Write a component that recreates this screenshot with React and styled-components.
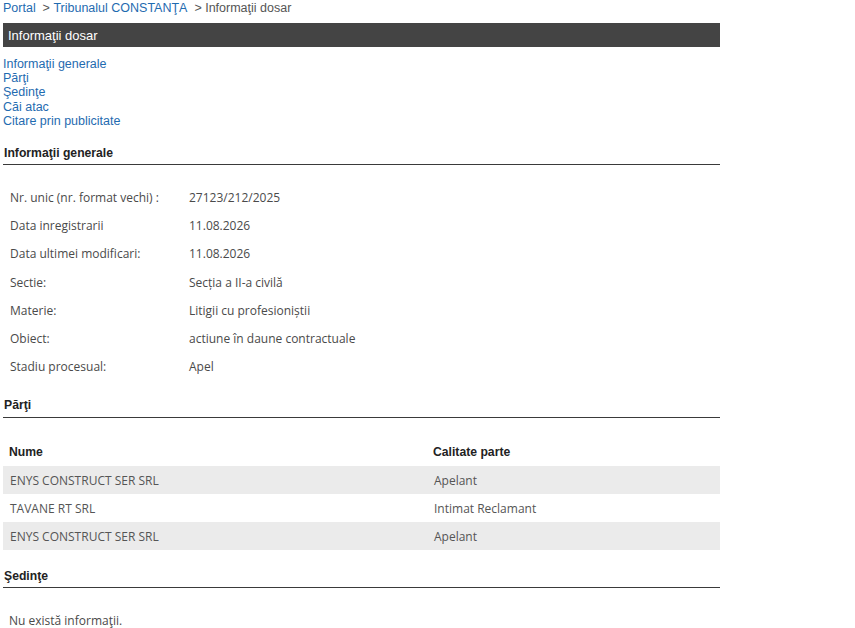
import React from 'react';
import styled, { createGlobalStyle } from 'styled-components';

const GlobalStyle = createGlobalStyle`
  html, body {
    margin: 0;
    padding: 0;
    background: #ffffff;
  }
  body {
    font-family: 'Liberation Sans', Arial, sans-serif;
  }
`;

const Page = styled.div`
  width: 717px;
  padding: 0 3px;
`;

const Breadcrumb = styled.div`
  display: flex;
  align-items: center;
  height: 15px;
  font-size: 12.5px;
  color: #555;
  white-space: pre;
`;

const CrumbLink = styled.a`
  color: #1f6bb0;
  text-decoration: none;
`;

const TitleBar = styled.div`
  margin-top: 8px;
  height: 24px;
  display: flex;
  align-items: center;
  padding-left: 5px;
  background: #444444;
  color: #ffffff;
  font-size: 13px;
`;

const AnchorList = styled.nav`
  display: flex;
  flex-direction: column;
  margin-top: 10px;
`;

const Anchor = styled.a`
  color: #1f6bb0;
  font-size: 12.5px;
  line-height: 14.2px;
  text-decoration: none;
`;

const SectionTitle = styled.h3`
  margin: ${p => p.$top}px 0 0;
  padding: 0 0 ${p => p.$gap || 3}px 1px;
  border-bottom: 1px solid #3a3a3a;
  font-size: 12.2px;
  font-weight: bold;
  color: #222;
  line-height: 15px;
`;

const InfoGrid = styled.div`
  display: grid;
  grid-template-columns: 179px 1fr;
  margin-top: 18px;
  padding-left: 7px;
  font-family: 'Open Sans', 'DejaVu Sans', sans-serif;
  font-size: 12px;
  color: #4a4a4a;
`;

const InfoCell = styled.div`
  height: 28.3px;
  display: flex;
  align-items: center;
`;

const PartsTable = styled.div`
  margin-top: 20px;
  display: flex;
  flex-direction: column;
`;

const PartsRow = styled.div`
  display: grid;
  grid-template-columns: 424px 1fr;
  height: 28px;
  align-items: center;
  background: ${p => (p.$shaded ? '#ebebeb' : 'transparent')};
`;

const HeadCell = styled.div`
  padding-left: 6px;
  font-size: 12.2px;
  font-weight: bold;
  color: #222;
`;

const BodyCell = styled.div`
  padding-left: 7px;
  font-family: 'Open Sans', 'DejaVu Sans', sans-serif;
  font-size: 12px;
  color: #555;
`;

const EmptyNote = styled.p`
  margin: 26px 0 0 6px;
  font-family: 'Open Sans', 'DejaVu Sans', sans-serif;
  font-size: 12px;
  line-height: 14px;
  color: #4a4a4a;
`;

const info = [
  ['Nr. unic (nr. format vechi) :', '27123/212/2025'],
  ['Data inregistrarii', '11.08.2026'],
  ['Data ultimei modificari:', '11.08.2026'],
  ['Sectie:', 'Secția a II-a civilă'],
  ['Materie:', 'Litigii cu profesioniștii'],
  ['Obiect:', 'actiune în daune contractuale'],
  ['Stadiu procesual:', 'Apel'],
];

const parties = [
  ['ENYS CONSTRUCT SER SRL', 'Apelant'],
  ['TAVANE RT SRL', 'Intimat Reclamant'],
  ['ENYS CONSTRUCT SER SRL', 'Apelant'],
];

export default function App() {
  return (
    <Page>
      <GlobalStyle />
      <Breadcrumb>
        <CrumbLink href="#">Portal</CrumbLink>
        {'  > '}
        <CrumbLink href="#">Tribunalul CONSTANŢA</CrumbLink>
        {'  > Informaţii dosar'}
      </Breadcrumb>

      <TitleBar>Informaţii dosar</TitleBar>

      <AnchorList>
        <Anchor href="#generale">Informaţii generale</Anchor>
        <Anchor href="#parti">Părţi</Anchor>
        <Anchor href="#sedinte">Şedinţe</Anchor>
        <Anchor href="#cai">Căi atac</Anchor>
        <Anchor href="#citare">Citare prin publicitate</Anchor>
      </AnchorList>

      <SectionTitle id="generale" $top={18}>Informaţii generale</SectionTitle>
      <InfoGrid>
        {info.map(([label, value]) => (
          <React.Fragment key={label}>
            <InfoCell>{label}</InfoCell>
            <InfoCell>{value}</InfoCell>
          </React.Fragment>
        ))}
      </InfoGrid>

      <SectionTitle id="parti" $top={17} $gap={4}>Părţi</SectionTitle>
      <PartsTable>
        <PartsRow>
          <HeadCell>Nume</HeadCell>
          <HeadCell>Calitate parte</HeadCell>
        </PartsRow>
        {parties.map(([name, role], i) => (
          <PartsRow key={i} $shaded={i % 2 === 0}>
            <BodyCell>{name}</BodyCell>
            <BodyCell>{role}</BodyCell>
          </PartsRow>
        ))}
      </PartsTable>

      <SectionTitle id="sedinte" $top={19}>Şedinţe</SectionTitle>
      <EmptyNote>Nu există informaţii.</EmptyNote>
    </Page>
  );
}
